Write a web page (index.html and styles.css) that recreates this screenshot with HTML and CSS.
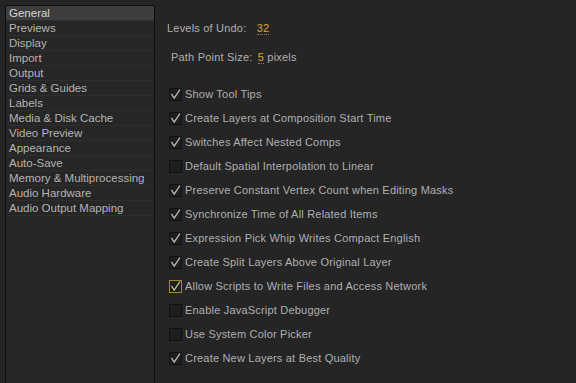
FILE: index.html
```html
<!DOCTYPE html>
<html lang="en">
<head>
  <meta charset="UTF-8" />
  <title>Preferences – General</title>
  <link rel="stylesheet" href="styles.css">
</head>
<body>
  <div class="prefs">
    <ul class="nav">
      <li class="active">General</li>
      <li>Previews</li>
      <li>Display</li>
      <li>Import</li>
      <li>Output</li>
      <li>Grids &amp; Guides</li>
      <li>Labels</li>
      <li>Media &amp; Disk Cache</li>
      <li>Video Preview</li>
      <li>Appearance</li>
      <li>Auto-Save</li>
      <li>Memory &amp; Multiprocessing</li>
      <li>Audio Hardware</li>
      <li>Audio Output Mapping</li>
    </ul>

    <div class="pane">
      <div class="field undo">Levels of Undo: <span class="num">32</span></div>
      <div class="field point">Path Point Size: <span class="num">5</span> pixels</div>

      <div class="checks">
        <label class="check on">Show Tool Tips</label>
        <label class="check on">Create Layers at Composition Start Time</label>
        <label class="check on">Switches Affect Nested Comps</label>
        <label class="check">Default Spatial Interpolation to Linear</label>
        <label class="check on">Preserve Constant Vertex Count when Editing Masks</label>
        <label class="check on">Synchronize Time of All Related Items</label>
        <label class="check on">Expression Pick Whip Writes Compact English</label>
        <label class="check on">Create Split Layers Above Original Layer</label>
        <label class="check on focus">Allow Scripts to Write Files and Access Network</label>
        <label class="check">Enable JavaScript Debugger</label>
        <label class="check">Use System Color Picker</label>
        <label class="check on">Create New Layers at Best Quality</label>
      </div>
    </div>
  </div>
</body>
</html>
```

FILE: styles.css
```css
body {
  margin: 0;
  background: #252525;
  color: #b0b0b0;
  font-family: "Liberation Sans", Arial, sans-serif;
  font-size: 11px;
  overflow: hidden;
}
.prefs {
  display: flex;
  height: 383px;
  padding: 5px 0 0 5px;
  box-sizing: border-box;
}
.nav {
  list-style: none;
  margin: 0;
  padding: 0;
  width: 148px;
  background: #262626;
  border: 1px solid #0e0e0e;
  border-bottom: none;
  font-size: 11.5px;
}
.nav li {
  height: 14px;
  line-height: 14px;
  padding-left: 3px;
  border-bottom: 1px solid #2e2e2e;
  color: #b4b4b4;
}
.nav li.active {
  background: #3d3d3d;
  color: #d6d6d6;
}
.pane {
  flex: 1;
  padding: 16px 0 0 12px;
  letter-spacing: 0.2px;
}
.field {
  height: 14px;
  line-height: 14px;
}
.field .num {
  color: #d9a53c;
  border-bottom: 1px dotted #a07a30;
}
.undo {
  margin-bottom: 15px;
}
.undo .num { margin-left: 7px; }
.point { padding-left: 4px; }
.point .num { margin-left: 2px; }
.checks {
  display: flex;
  flex-direction: column;
  gap: 10px;
  margin-top: 23px;
  padding-left: 2px;
}
.check {
  display: flex;
  align-items: center;
  height: 14px;
}
.check::before {
  content: "";
  width: 11px;
  height: 11px;
  margin-right: 3px;
  border: 1px solid #101010;
  background: #1f1f1f;
  flex: none;
}
.check.on::before {
  background: #1f1f1f url("data:image/svg+xml;utf8,<svg xmlns='http://www.w3.org/2000/svg' width='11' height='11'><path d='M1.5 5 L4.2 9 L10 0.5' fill='none' stroke='%23c0c0c0' stroke-width='1.3'/></svg>") no-repeat center;
}
.check.focus::before {
  border-color: #a8843a;
}
```
